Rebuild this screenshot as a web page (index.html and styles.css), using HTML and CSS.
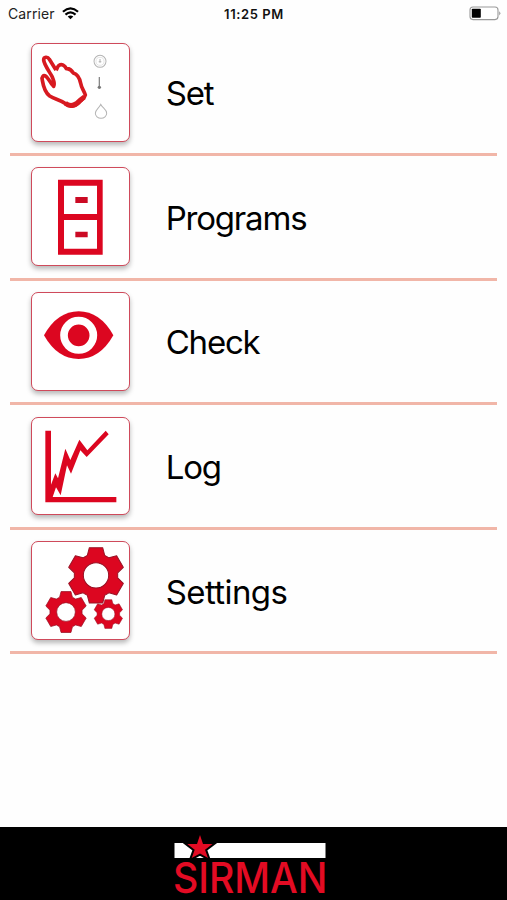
FILE: index.html
```html
<!DOCTYPE html>
<html lang="en">
<head>
<meta charset="utf-8">
<title>Sirman</title>
<link rel="stylesheet" href="styles.css">
</head>
<body>
<div class="app">
  <header class="status">
    <div class="carrier"><span>Carrier</span>
      <svg class="wifi" viewBox="0 0 54 39"><g fill="none" stroke="#000" stroke-width="7"><path d="M3 14Q27-7 51 14"/><path d="M11 23Q27 9 43 23"/></g><path d="M18 29Q27 22 36 29L27 38Z"/></svg>
    </div>
    <span class="time">11:25 PM</span>
    <svg class="battery" viewBox="0 0 32 15"><rect x="1" y="1" width="28" height="12.6" rx="3" fill="#fff" stroke="#999" stroke-width="1.1"/><rect x="2.8" y="2.8" width="9" height="9" rx=".8"/><path d="M30.3 5.2Q32.3 7.3 30.3 9.4Z" fill="#888"/></svg>
  </header>
  <main class="menu">
    <a class="row"><span class="card"><svg viewBox="33 21 296 296">
      <path d="M108 102L88 70C83 61 71 62 71 72C72 85 86 104 96 121C101 134 106 142 101 151C94 145 85 127 78 121C70 116 64 123 67 133C70 151 76 170 89 180C105 190 122 192 137 203C149 215 165 212 176 201C184 192 194 188 196 177C192 164 184 156 182 142C179 126 173 115 160 111C155 103 148 97 139 98C134 88 125 84 119 87C111 90 113 97 108 102" fill="none" stroke="#d71920" stroke-width="11" stroke-linejoin="round"/>
      <path d="M136 202Q152 214 169 203Q180 192 193 183" fill="none" stroke="#d71920" stroke-width="15"/>
      <g fill="none" stroke="#b4b4b4" stroke-width="3"><circle cx="240" cy="76" r="18"/><circle cx="240" cy="76" r="12" stroke-width="1"/><path d="M240 69V80M236 77H244"/><path d="M242 205C237 217 226 220 226 232A17 15 0 0 0 260 232C260 220 248 217 242 205Z"/></g>
      <path d="M238 123V151" stroke="#888" stroke-width="4"/><circle cx="238" cy="154" r="5" fill="#777"/>
    </svg></span><span class="label">Set</span></a>
    <a class="row"><span class="card"><svg viewBox="33 23 296 296">
      <path fill="#dc0620" fill-rule="evenodd" d="M114 61H248V286H114ZM132 79V164H231V79ZM132 182V268H231V182Z"/><path fill="#cb0a24" d="M166 113H203V131H166ZM166 217H203V234H166Z"/>
    </svg></span><span class="label">Programs</span></a>
    <a class="row"><span class="card"><svg viewBox="33 22 296 296">
      <path fill="#dc0620" d="M72 152Q112 80 176 80Q240 80 280 152Q240 223 176 223Q112 223 72 152Z"/><circle cx="176" cy="152" r="44" fill="#dc0620" stroke="#fff" stroke-width="23"/>
    </svg></span><span class="label">Check</span></a>
    <a class="row"><span class="card"><svg viewBox="33 21 296 296">
      <path fill="#dc0620" d="M76 62H93V224L106 190L114 205L136 116L151 150L178 89L202 121L257 62L266 73L200 141L181 121L153 191L141 166L122 256L108 232L98 261H289V277H76Z"/>
    </svg></span><span class="label">Log</span></a>
    <a class="row"><span class="card"><svg viewBox="33 20 296 296">
      <defs><path id="gear" d="M-26-60L-20-83H20L26-60L39-52.5L61.9-58.8L81.9-24.2L65-7.5V7.5L81.9 24.2L61.9 58.8L39 52.5L26 60L20 83H-20L-26 60L-39 52.5L-61.9 58.8L-81.9 24.2L-65 7.5V-7.5L-81.9-24.2L-61.9-58.8L-39-52.5ZM38 0A38 38 0 1 0-38 0A38 38 0 1 0 38 0Z"/></defs>
      <g fill="#dc0620" fill-rule="evenodd" stroke="#981225" stroke-width="3" stroke-linejoin="round"><use href="#gear" transform="translate(228 123)"/><use href="#gear" transform="translate(138 233) scale(.74)"/><use href="#gear" transform="translate(265 239) scale(.52)"/></g>
    </svg></span><span class="label wide">Settings</span></a>
  </main>
  <footer class="footer">
    <svg class="logo" viewBox="160 820 180 80">
      <path fill="#fff" d="M174.5 843H325.5V858H174.5Z"/>
      <path fill="#e30b23" stroke="#000" stroke-width="4" paint-order="stroke" d="M200 835L203 844H212.5L205 849.7L208 858L200 853.4L191.7 858L194.7 849.7L187.3 844H197Z"/>
      <text class="brand" x="173" y="893" textLength="154.5" lengthAdjust="spacingAndGlyphs">SIRMAN</text>
    </svg>
  </footer>
</div>
</body>
</html>
```

FILE: styles.css
```css
* { box-sizing: border-box; }
body { margin: 0; background: #fefefe; color: #000; font-family: Inter, "Liberation Sans", sans-serif; }
.app { height: 900px; display: flex; flex-direction: column; }
.status { height: 31.4px; padding: 0 6px 4.4px 8px; display: grid; grid-template-columns: 1fr auto 1fr; align-items: center; }
.carrier { display: flex; align-items: center; gap: 7px; font-size: 14px; color: #222; letter-spacing: 0.1px; }
.wifi { width: 17px; height: 13px; }
.time { font-size: 13px; font-weight: 600; letter-spacing: 0.6px; color: #111; margin-right: 1px; }
.battery { width: 32px; height: 15px; justify-self: end; }
.menu { flex: 1; padding: 0 10px; }
.row { display: flex; align-items: center; height: 124.6px; padding: 0 0 0 21px; border-bottom: 3px solid #f1b6a8; }
.card { width: 98.7px; height: 98.7px; flex: none; border: 1.5px solid #cf4a5b; border-radius: 7px; background: #fff; box-shadow: 0 3px 5px rgba(0, 0, 0, 0.28); }
.card svg { display: block; width: 98.7px; height: 98.7px; margin: -1px; }
.label { margin-left: 36px; padding-top: 2px; font-size: 33px; line-height: 40px; letter-spacing: -1.2px; }
.wide { letter-spacing: -0.6px; }
.footer { height: 73px; background: #000; display: flex; justify-content: center; overflow: hidden; }
.logo { width: 180px; height: 80px; margin: -7px 7px 0 0; flex: none; overflow: visible; }
.brand { font-family: Inter, sans-serif; font-size: 43px; font-weight: 500; fill: #e30b23; }
```
